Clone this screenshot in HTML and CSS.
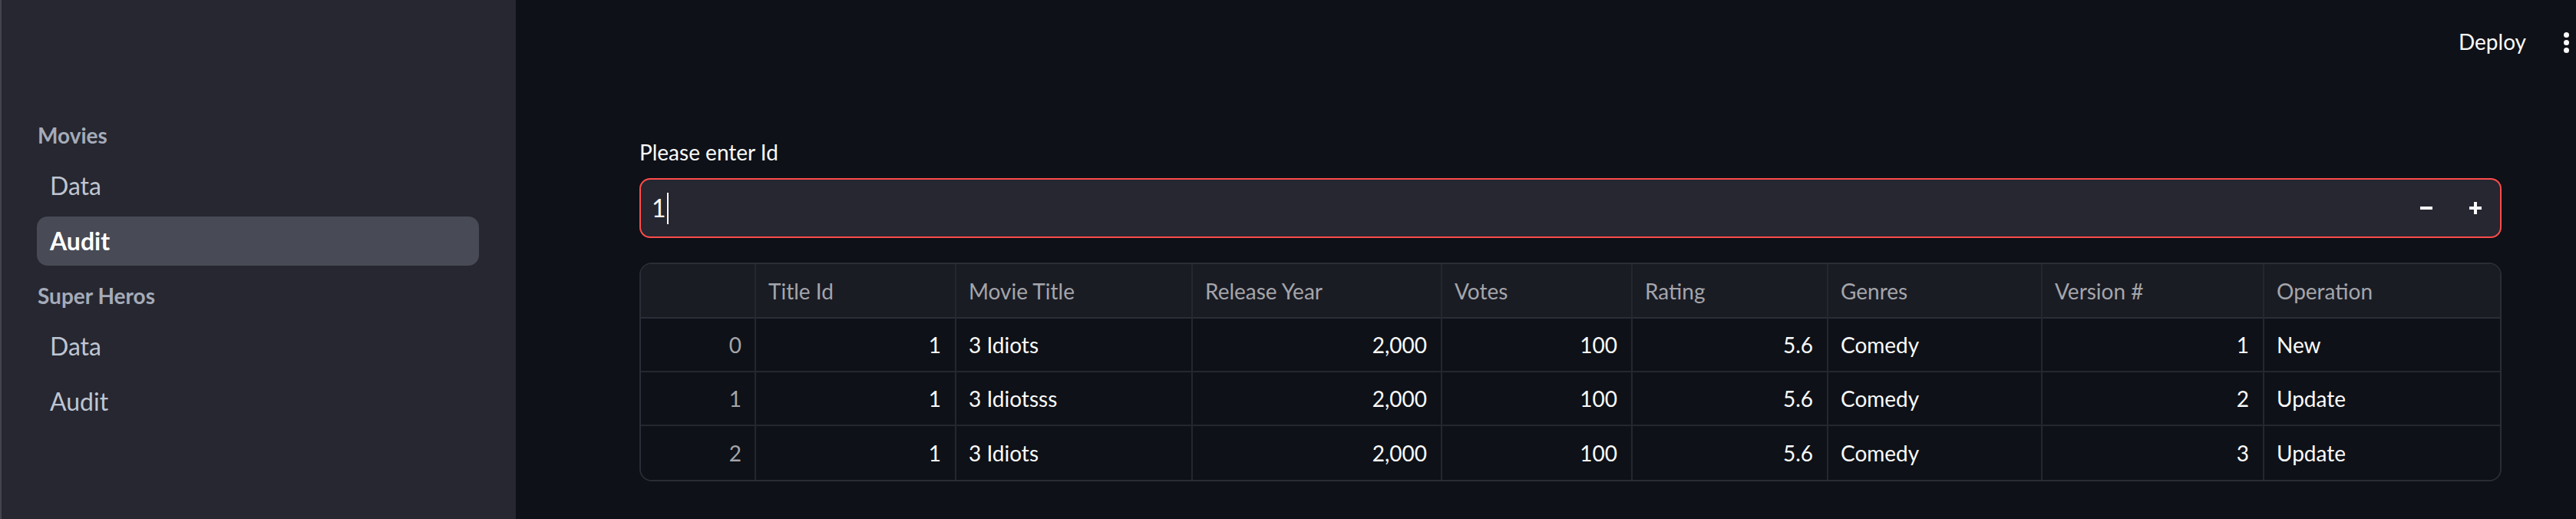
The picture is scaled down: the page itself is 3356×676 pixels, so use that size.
FILE: index.html
```html
<!DOCTYPE html>
<html lang="en">
<head>
<meta charset="utf-8">
<title>Audit</title>
<link rel="stylesheet" href="styles.css">
</head>
<body>
<div class="app">
  <aside class="sidebar">
    <nav class="nav">
      <div class="nav-section">Movies</div>
      <a class="nav-link">Data</a>
      <a class="nav-link active">Audit</a>
      <div class="nav-section second">Super Heros</div>
      <a class="nav-link">Data</a>
      <a class="nav-link">Audit</a>
    </nav>
  </aside>
  <main class="main">
    <header class="topbar">
      <span class="deploy">Deploy</span>
      <span class="menu"><i></i><i></i><i></i></span>
    </header>
    <section class="content">
      <label class="field-label">Please enter Id</label>
      <div class="number-input">
        <div class="value">1<span class="caret"></span></div>
        <button class="step" aria-label="decrement">
          <svg width="16" height="16" viewBox="0 0 16 16"><rect x="0" y="6" width="16" height="4" fill="#fafafa"/></svg>
        </button>
        <button class="step" aria-label="increment">
          <svg width="16" height="16" viewBox="0 0 16 16"><rect x="0" y="6" width="16" height="4" fill="#fafafa"/><rect x="6" y="0" width="4" height="16" fill="#fafafa"/></svg>
        </button>
      </div>
      <div class="grid-wrap">
        <table class="grid">
          <colgroup>
            <col style="width:150px"><col style="width:261px"><col style="width:308px"><col style="width:325px"><col style="width:248px"><col style="width:255px"><col style="width:279px"><col style="width:289px"><col>
          </colgroup>
          <thead>
            <tr><th></th><th>Title Id</th><th>Movie Title</th><th>Release Year</th><th>Votes</th><th>Rating</th><th>Genres</th><th>Version #</th><th>Operation</th></tr>
          </thead>
          <tbody>
            <tr><td class="idx">0</td><td class="num">1</td><td>3 Idiots</td><td class="num">2,000</td><td class="num">100</td><td class="num">5.6</td><td>Comedy</td><td class="num">1</td><td>New</td></tr>
            <tr><td class="idx">1</td><td class="num">1</td><td>3 Idiotsss</td><td class="num">2,000</td><td class="num">100</td><td class="num">5.6</td><td>Comedy</td><td class="num">2</td><td>Update</td></tr>
            <tr><td class="idx">2</td><td class="num">1</td><td>3 Idiots</td><td class="num">2,000</td><td class="num">100</td><td class="num">5.6</td><td>Comedy</td><td class="num">3</td><td>Update</td></tr>
          </tbody>
        </table>
      </div>
    </section>
  </main>
</div>
</body>
</html>
```
FILE: styles.css
```css
* { box-sizing: border-box; }
html, body { margin: 0; padding: 0; height: 100%; }
body {
  background: #0e1117;
  color: #fafafa;
  font-family: Lato, "Noto Sans", sans-serif;
  overflow: hidden;
}
.app { display: flex; height: 100vh; }

.sidebar {
  width: 672px;
  flex: 0 0 672px;
  background: #262730;
  border-left: 2px solid #43444e;
  padding: 156px 48px 0 46px;
}
.nav { display: flex; flex-direction: column; }
.nav-section {
  font-size: 28px;
  line-height: 40px;
  font-weight: 700;
  color: #a5abb9;
  padding-left: 1px;
  margin-bottom: 14px;
}
.nav-section.second { margin-top: 19px; }
.nav-link {
  display: block;
  height: 64px;
  line-height: 64px;
  font-size: 32px;
  color: #bfc5d3;
  padding-left: 17px;
  border-radius: 14px;
}
.nav-link + .nav-link { margin-top: 8px; }
.nav-link.active {
  background: #484a55;
  color: #ffffff;
  font-weight: 700;
}

.main { flex: 1; display: flex; flex-direction: column; min-width: 0; }
.topbar {
  height: 108px;
  display: flex;
  align-items: center;
  justify-content: flex-end;
  padding-right: 9px;
}
.deploy {
  font-size: 28px;
  color: #fafafa;
  margin-right: 49px;
}
.menu { display: flex; flex-direction: column; gap: 3px; margin-top: 2px; }
.menu i { display: block; width: 7px; height: 7px; border-radius: 50%; background: #fafafa; }

.content {
  padding: 70px 97px 0 161px;
  display: flex;
  flex-direction: column;
}
.field-label {
  font-size: 28px;
  line-height: 40px;
  color: #fafafa;
  margin-bottom: 14px;
}
.number-input {
  height: 78px;
  border: 2px solid #ff4b4b;
  border-radius: 14px;
  background: #262730;
  display: flex;
  align-items: center;
  padding-left: 14px;
}
.value {
  flex: 1;
  font-size: 32px;
  line-height: 40px;
  color: #fafafa;
  display: flex;
  align-items: center;
}
.caret {
  display: inline-block;
  width: 2px;
  height: 41px;
  background: #fafafa;
  margin-left: 1px;
}
.step {
  width: 64px;
  height: 74px;
  border: 0;
  padding: 0;
  background: transparent;
  display: flex;
  align-items: center;
  justify-content: center;
}

.grid-wrap {
  margin-top: 32px;
  border: 2px solid #2b2d36;
  border-radius: 16px;
  overflow: hidden;
}
.grid {
  width: 100%;
  table-layout: fixed;
  border-collapse: separate;
  border-spacing: 0;
  font-size: 28px;
}
.grid th, .grid td {
  padding: 0 16px 0 16px;
  border-right: 2px solid #25272e;
  border-bottom: 2px solid #25272e;
  white-space: nowrap;
  overflow: hidden;
}
.grid th:last-child, .grid td:last-child { border-right: 0; }
.grid tbody tr:last-child td { border-bottom: 0; }
.grid th {
  height: 71px;
  background: #1a1c24;
  color: #a4a5aa;
  font-weight: 400;
  text-align: left;
  border-bottom-color: #2b2d36;
}
.grid td {
  height: 70px;
  color: #fafafa;
  background: #0e1117;
}
.grid td.num { text-align: right; padding-right: 18px; }
.grid td.idx { text-align: right; color: #a4a5aa; padding-right: 17px; }
```
